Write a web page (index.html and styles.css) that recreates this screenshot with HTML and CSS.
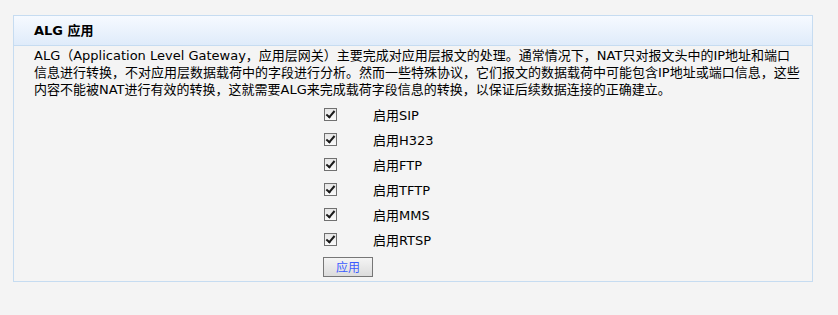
FILE: index.html
```html
<!DOCTYPE html>
<html lang="zh-CN">
<head>
    <meta charset="UTF-8">
    <title>ALG 应用</title>
    <link rel="stylesheet" href="styles.css">
</head>
<body>
    <div class="panel">
        <div class="panel-head">ALG 应用</div>
        <div class="panel-body">
            <p class="desc">ALG（Application Level Gateway，应用层网关）主要完成对应用层报文的处理。通常情况下，NAT只对报文头中的IP地址和端口信息进行转换，不对应用层数据载荷中的字段进行分析。然而一些特殊协议，它们报文的数据载荷中可能包含IP地址或端口信息，这些内容不能被NAT进行有效的转换，这就需要ALG来完成载荷字段信息的转换，以保证后续数据连接的正确建立。</p>
            <div class="options">
                <label class="opt"><span class="box"><input type="checkbox" checked></span><span>启用SIP</span></label>
                <label class="opt"><span class="box"><input type="checkbox" checked></span><span>启用H323</span></label>
                <label class="opt"><span class="box"><input type="checkbox" checked></span><span>启用FTP</span></label>
                <label class="opt"><span class="box"><input type="checkbox" checked></span><span>启用TFTP</span></label>
                <label class="opt"><span class="box"><input type="checkbox" checked></span><span>启用MMS</span></label>
                <label class="opt"><span class="box"><input type="checkbox" checked></span><span>启用RTSP</span></label>
                <div class="actions"><button class="btn">应用</button></div>
            </div>
        </div>
    </div>
</body>
</html>
```

FILE: styles.css
```css
body {
    margin: 0;
    padding: 15px 0 0 13px;
    background: #f4f4f4;
    font-family: "DejaVu Sans", "Noto Sans CJK SC", sans-serif;
    font-size: 13px;
    color: #000;
}
.panel {
    width: 798px;
    border: 1px solid #c6dcf1;
}
.panel-head {
    height: 29px;
    line-height: 29px;
    padding-left: 20px;
    font-weight: bold;
    border-bottom: 1px solid #c6dcf1;
    background: linear-gradient(#f6faff, #dfebfa);
}
.panel-body {
    padding: 1px 10px 4px 20px;
}
.desc {
    margin: 0;
    line-height: 17px;
}
.options {
    padding: 4px 0 0 290px;
}
.opt {
    display: flex;
    align-items: center;
    height: 25px;
}
.box {
    width: 49px;
    display: flex;
}
.box input {
    appearance: none;
    position: relative;
    width: 13px;
    height: 13px;
    margin: 0;
    border: 1px solid #707070;
    background: linear-gradient(#e6e6e6, #fafafa);
}
.box input:checked::after {
    content: "";
    position: absolute;
    left: 3px;
    top: 0;
    width: 3px;
    height: 7px;
    border: solid #1a1a1a;
    border-width: 0 2px 2px 0;
    transform: rotate(40deg);
}
.actions {
    padding-top: 5px;
}
.btn {
    width: 50px;
    height: 20px;
    margin-left: -1px;
    padding: 0;
    border: 1px solid #767676;
    background: linear-gradient(#f4f4f4, #dcdcdc);
    color: #3b5bff;
    font-family: "Noto Sans CJK SC", sans-serif;
    font-size: 12px;
    line-height: 18px;
}
```
